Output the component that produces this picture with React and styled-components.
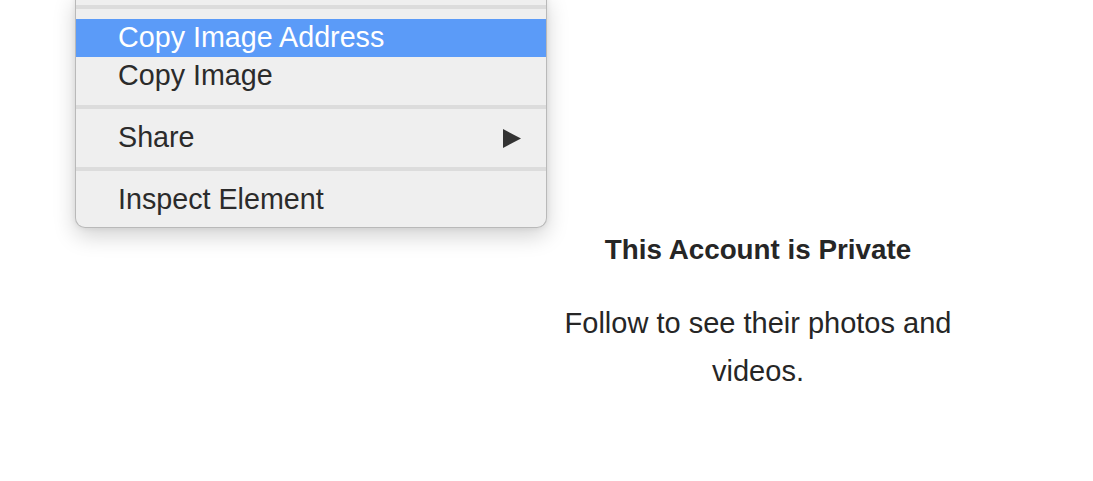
import React from "react";
import styled, { createGlobalStyle } from "styled-components";

const Global = createGlobalStyle`
  html, body { margin: 0; padding: 0; background: #ffffff; }
  body { font-family: "Liberation Sans", Arial, sans-serif; overflow: hidden; }
`;

const Page = styled.div`
  position: relative;
  width: 1093px;
  height: 481px;
  background: #ffffff;
  display: flex;
  justify-content: flex-start;
`;

const PrivateNotice = styled.section`
  margin-left: 558px;
  padding-top: 232px;
  width: 400px;
  display: flex;
  flex-direction: column;
  align-items: center;
  text-align: center;
  color: #262626;
`;

const Title = styled.h2`
  margin: 0;
  font-size: 27.8px;
  line-height: 36px;
  font-weight: 700;
`;

const Message = styled.p`
  margin: 31px 0 0;
  font-size: 29px;
  line-height: 48px;
  font-weight: 400;
`;

const Menu = styled.div`
  position: absolute;
  left: 75px;
  top: -5px;
  width: 470px;
  padding-bottom: 8px;
  background: #efefef;
  border: 1px solid #b9b9b9;
  border-top: none;
  border-radius: 0 0 10px 10px;
  box-shadow: 0 8px 22px rgba(0, 0, 0, 0.18), 0 0 6px rgba(0, 0, 0, 0.08);
  display: flex;
  flex-direction: column;
`;

const Separator = styled.div`
  padding: 10px 0;
  &::after {
    content: "";
    display: block;
    height: 4px;
    background: #dcdcdc;
  }
`;

const Item = styled.div`
  display: flex;
  align-items: center;
  justify-content: space-between;
  height: 36px;
  padding: 0 25px 2px 42px;
  font-size: 28.7px;
  line-height: 36px;
  color: ${(p) => (p.$active ? "#ffffff" : "#2b2b2b")};
  background: ${(p) => (p.$active ? "#5b9bf8" : "transparent")};
  white-space: nowrap;
`;

const Arrow = styled.svg`
  width: 18px;
  height: 19px;
  margin-top: 2px;
  fill: #333333;
`;

export default function App() {
  return (
    <>
      <Global />
      <Page>
        <PrivateNotice>
          <Title>This Account is Private</Title>
          <Message>Follow to see their photos and videos.</Message>
        </PrivateNotice>
        <Menu>
          <Separator />
          <Item $active>Copy Image Address</Item>
          <Item>Copy Image</Item>
          <Separator />
          <Item>
            <span>Share</span>
            <Arrow viewBox="0 0 18 19">
              <polygon points="0,0 18,9.5 0,19" />
            </Arrow>
          </Item>
          <Separator />
          <Item>Inspect Element</Item>
        </Menu>
      </Page>
    </>
  );
}
